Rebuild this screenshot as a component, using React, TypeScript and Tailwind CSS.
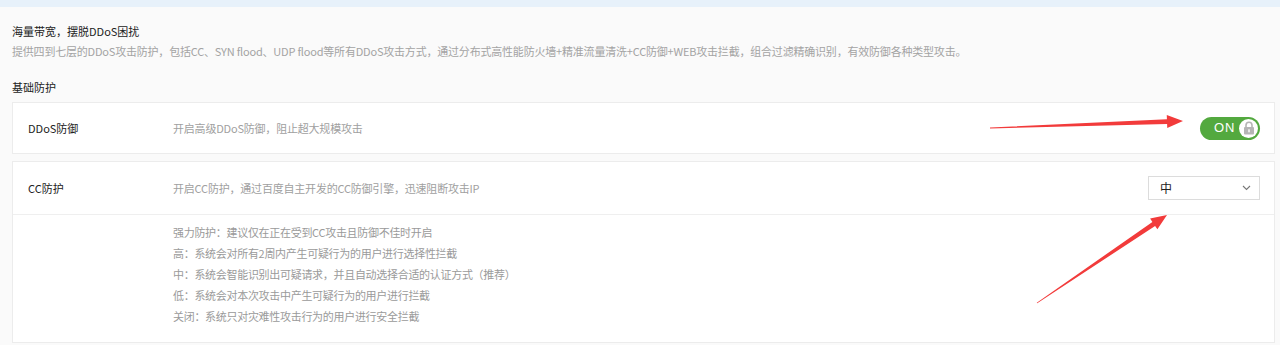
import type { ReactNode } from "react";

const FONT = { fontFamily: '"Noto Sans CJK SC", "Liberation Sans", sans-serif' };

const LEVEL_NOTES = [
  "强力防护：建议仅在正在受到CC攻击且防御不佳时开启",
  "高：系统会对所有2周内产生可疑行为的用户进行选择性拦截",
  "中：系统会智能识别出可疑请求，并且自动选择合适的认证方式（推荐）",
  "低：系统会对本次攻击中产生可疑行为的用户进行拦截",
  "关闭：系统只对灾难性攻击行为的用户进行安全拦截",
];

/** 标注用红箭头：尾部细、头部粗，末端三角箭头 */
function arrowPoints(tx: number, ty: number, hx: number, hy: number) {
  const dx = hx - tx;
  const dy = hy - ty;
  const len = Math.hypot(dx, dy);
  const ux = dx / len;
  const uy = dy / len;
  const nx = -uy;
  const ny = ux;
  const headLen = 16;
  const bx = hx - ux * headLen;
  const by = hy - uy * headLen;
  const pts: [number, number][] = [
    [tx + nx * 0.4, ty + ny * 0.4],
    [bx + nx * 2.4, by + ny * 2.4],
    [bx + nx * 6.5, by + ny * 6.5],
    [hx, hy],
    [bx - nx * 6.5, by - ny * 6.5],
    [bx - nx * 2.4, by - ny * 2.4],
    [tx - nx * 0.4, ty - ny * 0.4],
  ];
  return pts.map((p) => p.join(",")).join(" ");
}

function Card({ children }: { children: ReactNode }) {
  return <div className="border border-[#ececec] bg-white">{children}</div>;
}

function Row({ label, desc, children, className }: { label: string; desc: string; children: ReactNode; className: string }) {
  return (
    <div className={`flex items-center pl-[15px] pr-[14px] ${className}`}>
      <div className="w-[145px] text-[11px] text-[#222]">{label}</div>
      <div className="flex-1 text-[11px] tracking-[-0.2px] text-[#a0a0a0]">{desc}</div>
      {children}
    </div>
  );
}

function Toggle() {
  return (
    <div className="flex h-[23px] w-[60px] items-center justify-between rounded-full bg-[#53a93f] pl-[14px] pr-[2px]">
      <span className="text-[13px] tracking-[1px] text-white" style={{ fontFamily: '"Liberation Sans", sans-serif' }}>
        ON
      </span>
      <span className="flex h-[19px] w-[19px] items-center justify-center rounded-full bg-white">
        <svg width="12" height="14" viewBox="0 0 12 14">
          <path d="M3 6.5V4.2a3 3 0 0 1 6 0v2.3" fill="none" stroke="#b5b5b5" strokeWidth="1.6" />
          <rect x="1" y="6" width="10" height="7.5" rx="1" fill="#b5b5b5" />
          <rect x="5.3" y="8.3" width="1.4" height="3" fill="#fff" />
        </svg>
      </span>
    </div>
  );
}

function Select() {
  return (
    <div className="flex h-[24px] w-[112px] items-center justify-between border border-[#dcdcdc] bg-white pl-[11px] pr-[8px]">
      <span className="text-xs text-[#222]">中</span>
      <svg width="9" height="6" viewBox="0 0 9 6">
        <path d="M1 1l3.5 3.5L8 1" fill="none" stroke="#777" strokeWidth="1.1" />
      </svg>
    </div>
  );
}

export default function App() {
  return (
    <div className="relative h-[345px] w-[1280px] overflow-hidden bg-[#fafafa]" style={FONT}>
      <div className="h-[7px] bg-[#e7f1fa]" />
      <div className="pl-3 pr-[5px]">
        <div className="mt-[15px] text-[11px] leading-[18px] text-[#222]">海量带宽，摆脱DDoS困扰</div>
        <div className="mt-[2px] text-[11px] leading-[18px] tracking-[-0.2px] text-[#a3a3a3]">
          提供四到七层的DDoS攻击防护，包括CC、SYN flood、UDP flood等所有DDoS攻击方式，通过分布式高性能防火墙+精准流量清洗+CC防御+WEB攻击拦截，组合过滤精确识别，有效防御各种类型攻击。
        </div>
        <div className="mt-[18px] text-[11px] leading-[18px] text-[#222]">基础防护</div>
        <div className="mt-[6px] flex flex-col gap-[7px]">
          <Card>
            <Row label="DDoS防御" desc="开启高级DDoS防御，阻止超大规模攻击" className="h-[50px]">
              <Toggle />
            </Row>
          </Card>
          <Card>
            <Row label="CC防护" desc="开启CC防护，通过百度自主开发的CC防御引擎，迅速阻断攻击IP" className="h-[53px] border-b border-[#efefef]">
              <Select />
            </Row>
            <div className="flex flex-col pb-[15px] pl-[160px] pt-[7px]">
              {LEVEL_NOTES.map((t) => (
                <div key={t} className="text-[11px] leading-[21px] tracking-[-0.3px] text-[#9a9a9a]">
                  {t}
                </div>
              ))}
            </div>
          </Card>
        </div>
      </div>
      <svg className="pointer-events-none absolute left-0 top-0" width="1280" height="345">
        <polygon points={arrowPoints(990, 128, 1183, 121)} fill="#f23b3b" />
        <polygon points={arrowPoints(1037, 303, 1167, 215)} fill="#f23b3b" />
      </svg>
    </div>
  );
}
